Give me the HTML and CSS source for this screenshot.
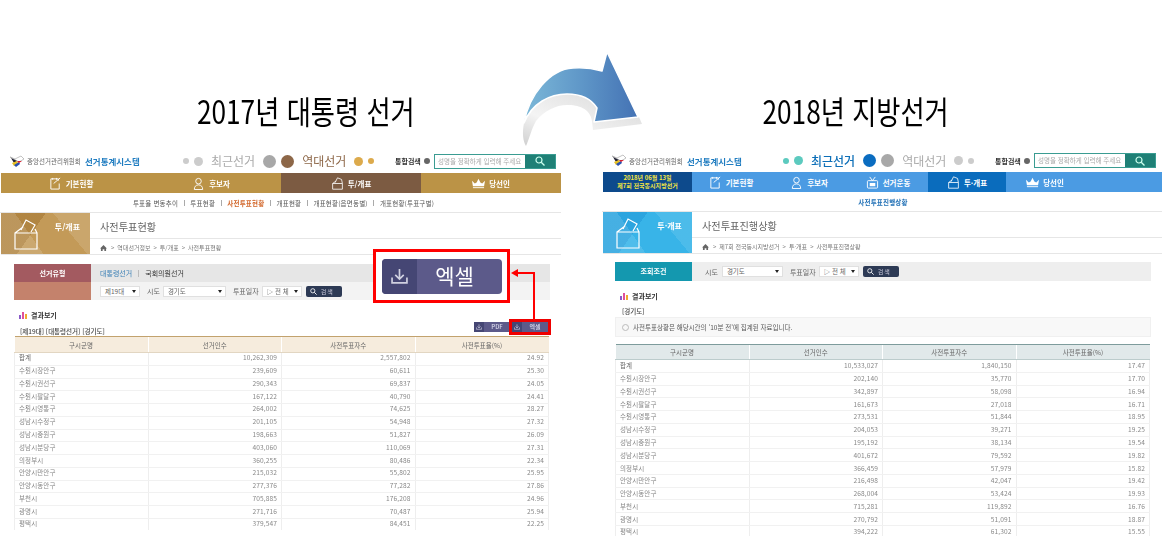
FILE: index.html
```html
<!DOCTYPE html>
<html lang="ko">
<head>
<meta charset="utf-8">
<title>2017 / 2018 선거통계시스템 비교</title>
<link rel="stylesheet" href="styles.css">
</head>
<body>
<svg class="sprite" width="0" height="0" aria-hidden="true">
  <symbol id="i-logo" viewBox="0 0 16 13"><path d="M1 2l5 2 6-3 3 3-5 3z" fill="#fff" stroke="#999" stroke-width=".6"/><path d="M2 3l6 3-3 2z" fill="#223"/><path d="M3 8l5-2 1 2-4 3z" fill="#e8c020"/><path d="M5 10l5-3 1 2-4 3z" fill="#2a50b0"/><path d="M8 6l5 0-3 2z" fill="#d82030"/></symbol>
  <symbol id="i-note" viewBox="0 0 14 14"><path d="M10 4V2H2v11h9V7M4 1v2M8 1v2M5 7l7-6" fill="none" stroke="currentColor" stroke-width="1"/></symbol>
  <symbol id="i-person" viewBox="0 0 14 14"><circle cx="7" cy="4.500" r="3" fill="none" stroke="currentColor"/><path d="M2.500 13.500c0-3 1.500-5 4.500-5s4.500 2 4.500 5z" fill="none" stroke="currentColor"/></symbol>
  <symbol id="i-tv" viewBox="0 0 14 14"><rect x="1.500" y="5" width="11" height="8" rx="1" fill="none" stroke="currentColor"/><rect x="4" y="7.500" width="6" height="3.500" fill="currentColor"/><path d="M4 1l3 4 3-4" fill="none" stroke="currentColor"/></symbol>
  <symbol id="i-box" viewBox="0 0 14 16"><path d="M1 8h12v7H1zM1 8l4-3M13 8l-1-5-5-2-3 6" fill="none" stroke="currentColor"/></symbol>
  <symbol id="i-crown" viewBox="0 0 14 10"><path d="M0 2l3 3 2-1 2-4 2 4 2 1 3-3-1 6H1z" fill="currentColor"/><path d="M1 9h12v1H1z" fill="currentColor"/></symbol>
  <symbol id="i-big" viewBox="0 0 24 32"><path d="M1 15h22v16H1zM1 15l8-6M23 15l-2-4M7 12l5-10 9 5-4 7" fill="none" stroke="currentColor" stroke-width="1.200"/></symbol>
  <symbol id="i-home" viewBox="0 0 8 7"><path d="M0 4l4-4 4 4H7v3H5V5H3v2H1V4z" fill="currentColor"/></symbol>
  <symbol id="i-bars" viewBox="0 0 8 7"><path d="M0 3h2v4H0z" fill="#8a5ac8"/><path d="M3 0h2v7H3z" fill="#e0509a"/><path d="M6 2h2v5H6z" fill="#f0a830"/></symbol>
  <symbol id="i-search" viewBox="0 0 10 10"><circle cx="4" cy="4" r="3" fill="none" stroke="currentColor" stroke-width="1.200"/><path d="M6.200 6.200L9.500 9.500" stroke="currentColor" stroke-width="1.300"/></symbol>
  <symbol id="i-dl" viewBox="0 0 16 14"><path d="M8 0v9M4 5.500l4 4 4-4M1 8v5h14V8" fill="none" stroke="currentColor" stroke-width="1.600"/></symbol>
</svg>

<main class="canvas">
  <section class="shot shot-a">
    <h2 class="caption"><span>2017년 대통령 선거</span></h2>
    <header class="top">
      <svg class="logo"><use href="#i-logo"/></svg>
      <span class="org">중앙선거관리위원회</span><strong class="sys">선거통계시스템</strong>
      <div class="switch">
        <i class="dot s6 off"></i><i class="dot s9 off"></i><b class="sw-txt off">최근선거</b><i class="dot s13 off2"></i>
        <i class="dot s13 on"></i><b class="sw-txt on-t">역대선거</b><i class="dot s9 on2"></i><i class="dot s6 on2"></i>
      </div>
      <div class="finder">
        <span class="finder-l">통합검색</span><i class="plus"></i>
        <div class="finder-box"><span class="finder-in">성명을 정확하게 입력해 주세요</span><span class="finder-b"><svg class="ic10"><use href="#i-search"/></svg></span></div>
      </div>
    </header>
    <nav class="nav">
      <a class="nav-i"><svg class="ic14"><use href="#i-note"/></svg>기본현황</a>
      <a class="nav-i"><svg class="ic14"><use href="#i-person"/></svg>후보자</a>
      <a class="nav-i active"><svg class="ic14"><use href="#i-box"/></svg>투/개표</a>
      <a class="nav-i"><svg class="ic14"><use href="#i-crown"/></svg>당선인</a>
    </nav>
    <div class="sub">
      <span>투표율 변동추이</span><u></u><span>투표현황</span><u></u><span class="cur">사전투표현황</span><u></u><span>개표현황</span><u></u><span>개표현황(읍면동별)</span><u></u><span>개표현황(투표구별)</span>
    </div>
    <div class="phead">
      <div class="badge"><svg class="ic-big"><use href="#i-big"/></svg><span>투/개표</span></div>
      <div class="ptext">
        <div class="ptitle">사전투표현황</div>
        <div class="crumb"><svg class="ic-home"><use href="#i-home"/></svg><span>&gt;</span><span>역대선거정보</span><span>&gt;</span><span>투/개표</span><span>&gt;</span><span>사전투표현황</span></div>
      </div>
    </div>
    <div class="content">
      <div class="filter">
        <div class="f-left"><div class="f-l1">선거유형</div><div class="f-l2"></div></div>
        <div class="f-right">
          <div class="f-tabs"><span class="tab-on">대통령선거</span><u></u><span class="tab">국회의원선거</span></div>
          <div class="f-row">
            <span class="sel w40">제19대</span><span class="lbl">시도</span><span class="sel w63">경기도</span><span class="lbl">투표일자</span><span class="sel w40">▷ 전 체</span>
            <span class="go"><svg class="ic8"><use href="#i-search"/></svg><em>검색</em></span>
          </div>
        </div>
      </div>
      <h3 class="rhead"><svg class="ic-bars"><use href="#i-bars"/></svg>결과보기</h3>
      <div class="rsub">
        <span>[제19대] [대통령선거] [경기도]</span>
        <div class="dls">
          <span class="dl"><i><svg class="ic7"><use href="#i-dl"/></svg></i><em>PDF</em></span>
          <span class="dl"><i><svg class="ic7"><use href="#i-dl"/></svg></i><em>엑셀</em></span>
        </div>
      </div>
      <table class="grid">
        <thead><tr><th>구시군명</th><th>선거인수</th><th>사전투표자수</th><th>사전투표율(%)</th></tr></thead>
        <tbody>
          <tr><td>합계</td><td>10,262,309</td><td>2,557,802</td><td>24.92</td></tr>
          <tr><td>수원시장안구</td><td>239,609</td><td>60,611</td><td>25.30</td></tr>
          <tr><td>수원시권선구</td><td>290,343</td><td>69,837</td><td>24.05</td></tr>
          <tr><td>수원시팔달구</td><td>167,122</td><td>40,790</td><td>24.41</td></tr>
          <tr><td>수원시영통구</td><td>264,002</td><td>74,625</td><td>28.27</td></tr>
          <tr><td>성남시수정구</td><td>201,105</td><td>54,948</td><td>27.32</td></tr>
          <tr><td>성남시중원구</td><td>198,663</td><td>51,827</td><td>26.09</td></tr>
          <tr><td>성남시분당구</td><td>403,060</td><td>110,069</td><td>27.31</td></tr>
          <tr><td>의정부시</td><td>360,255</td><td>80,486</td><td>22.34</td></tr>
          <tr><td>안양시만안구</td><td>215,032</td><td>55,802</td><td>25.95</td></tr>
          <tr><td>안양시동안구</td><td>277,376</td><td>77,282</td><td>27.86</td></tr>
          <tr><td>부천시</td><td>705,885</td><td>176,208</td><td>24.96</td></tr>
          <tr><td>광명시</td><td>271,716</td><td>70,487</td><td>25.94</td></tr>
          <tr><td>평택시</td><td>379,547</td><td>84,451</td><td>22.25</td></tr>
        </tbody>
      </table>
    </div>
  </section>

  <section class="shot shot-b">
    <h2 class="caption"><span>2018년 지방선거</span></h2>
    <header class="top">
      <svg class="logo"><use href="#i-logo"/></svg>
      <span class="org">중앙선거관리위원회</span><strong class="sys">선거통계시스템</strong>
      <div class="switch">
        <i class="dot s6 on2"></i><i class="dot s9 on2"></i><b class="sw-txt on-t">최근선거</b><i class="dot s13 on"></i>
        <i class="dot s13 off2"></i><b class="sw-txt off">역대선거</b><i class="dot s9 off"></i><i class="dot s6 off"></i>
      </div>
      <div class="finder">
        <span class="finder-l">통합검색</span><i class="plus"></i>
        <div class="finder-box"><span class="finder-in">성명을 정확하게 입력해 주세요</span><span class="finder-b"><svg class="ic10"><use href="#i-search"/></svg></span></div>
      </div>
    </header>
    <nav class="nav">
      <div class="banner"><span class="b1">2018년 06월 13일</span><span class="b2">제7회 전국동시지방선거</span></div>
      <a class="nav-i"><svg class="ic14"><use href="#i-note"/></svg>기본현황</a>
      <a class="nav-i"><svg class="ic14"><use href="#i-person"/></svg>후보자</a>
      <a class="nav-i wide"><svg class="ic14"><use href="#i-tv"/></svg>선거운동</a>
      <a class="nav-i active"><svg class="ic14"><use href="#i-box"/></svg>투·개표</a>
      <a class="nav-i"><svg class="ic14"><use href="#i-crown"/></svg>당선인</a>
    </nav>
    <div class="sub"><span class="cur">사전투표진행상황</span></div>
    <div class="phead">
      <div class="badge"><svg class="ic-big"><use href="#i-big"/></svg><span>투·개표</span></div>
      <div class="ptext">
        <div class="ptitle">사전투표진행상황</div>
        <div class="crumb"><svg class="ic-home"><use href="#i-home"/></svg><span>&gt;</span><span>제7회 전국동시지방선거</span><span>&gt;</span><span>투·개표</span><span>&gt;</span><span>사전투표진행상황</span></div>
      </div>
    </div>
    <div class="content">
      <div class="filter">
        <div class="f-left"><div class="f-l1">조회조건</div></div>
        <div class="f-right">
          <div class="f-row">
            <span class="lbl">시도</span><span class="sel w61">경기도</span><span class="lbl">투표일자</span><span class="sel w40">▷ 전 체</span>
            <span class="go"><svg class="ic8"><use href="#i-search"/></svg><em>검색</em></span>
          </div>
        </div>
      </div>
      <h3 class="rhead"><svg class="ic-bars"><use href="#i-bars"/></svg>결과보기</h3>
      <div class="rsub"><span>[경기도]</span></div>
      <p class="notice"><i></i>사전투표상황은 해당시간의 '10분 전'에 집계된 자료입니다.</p>
      <table class="grid">
        <thead><tr><th>구시군명</th><th>선거인수</th><th>사전투표자수</th><th>사전투표율(%)</th></tr></thead>
        <tbody>
          <tr><td>합계</td><td>10,533,027</td><td>1,840,150</td><td>17.47</td></tr>
          <tr><td>수원시장안구</td><td>202,140</td><td>35,770</td><td>17.70</td></tr>
          <tr><td>수원시권선구</td><td>342,897</td><td>58,098</td><td>16.94</td></tr>
          <tr><td>수원시팔달구</td><td>161,673</td><td>27,018</td><td>16.71</td></tr>
          <tr><td>수원시영통구</td><td>273,531</td><td>51,844</td><td>18.95</td></tr>
          <tr><td>성남시수정구</td><td>204,053</td><td>39,271</td><td>19.25</td></tr>
          <tr><td>성남시중원구</td><td>195,192</td><td>38,134</td><td>19.54</td></tr>
          <tr><td>성남시분당구</td><td>401,672</td><td>79,592</td><td>19.82</td></tr>
          <tr><td>의정부시</td><td>366,459</td><td>57,979</td><td>15.82</td></tr>
          <tr><td>안양시만안구</td><td>216,498</td><td>42,047</td><td>19.42</td></tr>
          <tr><td>안양시동안구</td><td>268,004</td><td>53,424</td><td>19.93</td></tr>
          <tr><td>부천시</td><td>715,281</td><td>119,892</td><td>16.76</td></tr>
          <tr><td>광명시</td><td>270,792</td><td>51,091</td><td>18.87</td></tr>
          <tr><td>평택시</td><td>394,222</td><td>61,302</td><td>15.55</td></tr>
        </tbody>
      </table>
    </div>
  </section>

  <svg class="swoosh" viewBox="0 0 130 110" aria-hidden="true">
    <defs>
      <linearGradient id="sw" x1="0" y1="0" x2="1" y2="0"><stop offset="0" stop-color="#7cb8d8"/><stop offset=".5" stop-color="#5f97c8"/><stop offset="1" stop-color="#4472b4"/></linearGradient>
      <linearGradient id="sw2" x1="0" y1="1" x2="1" y2="0"><stop offset="0" stop-color="#cfcfcf"/><stop offset=".35" stop-color="#f4f4f4"/><stop offset="1" stop-color="#d8d8d8"/></linearGradient>
    </defs>
    <path d="M4 78C2 88 3 96 6 101C9 95 11 85 16 76C24 66 36 60 47 60C58 60 70 63 72 76L73 85L122 79L119 72L74 77L77 63C70 52 58 49 47 49C30 49 12 58 4 78Z" fill="url(#sw2)"/>
    <path d="M4 78C9 50 30 24 53 23C65 22 75 24 82 26L87 7L118 72L74 77L77 63C70 52 58 49 47 49C30 49 12 58 4 78Z" fill="url(#sw)" stroke="#fff" stroke-width="1.500" stroke-linejoin="round"/>
  </svg>

  <div class="callout">
    <div class="big-dl"><i><svg class="ic-dl"><use href="#i-dl"/></svg></i><em>엑셀</em></div>
  </div>
  <div class="mark"></div>
  <svg class="link" viewBox="0 0 32 56" aria-hidden="true"><path d="M23 52V5H6" fill="none" stroke="#f00" stroke-width="2"/><path d="M0 5l7-4v8z" fill="#f00"/></svg>
</main>
</body>
</html>
```
FILE: styles.css
```css
* { box-sizing: border-box; }
html, body { margin: 0; height: 100%; background: #fff; overflow: hidden; }
body { font-family: "Noto Sans CJK KR", "Noto Sans", sans-serif; color: #555; }
.sprite { position: absolute; }
h2, h3, p { margin: 0; }
em { font-style: normal; }
i { font-style: normal; display: block; }
u { text-decoration: none; }

.canvas {
  position: relative;
  width: 1162px;
  height: 536px;
  display: grid;
  grid-template-columns: 561px 560px;
  column-gap: 41px;
  overflow: hidden;
  filter: blur(.4px);
}

.shot { display: flex; flex-direction: column; overflow: hidden; }
.shot-a {
  height: 530px;
  --nav: #bb9346; --nav-on: #7c5b42; --on: #8d6748; --on2: #dcaa4c; --sub-cur: #d2662a;
  --pad: 14px; --top: 23px; --fgap: 9px;
  --th: #f6ecdd; --th-top: #c2a26e; --th-bot: #e2d6c2;
}
.shot-b {
  height: 536px;
  --nav: #4b9be3; --nav-on: #0a6cbd; --on: #0a6cc0; --on2: #5ccabf; --sub-cur: #1f6fb5;
  --pad: 13px; --top: 22px; --fgap: 8px;
  --th: #e1e9ea; --th-top: #7e9c9c; --th-bot: #bccccc;
}

.caption { height: 150px; flex: none; padding-top: 87px; font-size: 32px; line-height: 46px; font-weight: 400; color: #000; text-align: center; white-space: nowrap; }
.caption span { display: inline-block; transform: scaleX(.82); }
.shot-a .caption { margin-left: 50px; }
.shot-b .caption { margin-right: 52px; }

/* top bar */
.top { height: var(--top); flex: none; display: flex; align-items: center; padding-left: 9px; padding-bottom: 1px; }
.logo { width: 16px; height: 13px; flex: none; }
.org { font-size: 6.500px; margin-left: 2px; color: #666; white-space: nowrap; width: 58px; }
.sys { font-size: 8.500px; color: #1f7cc0; font-weight: 700; white-space: nowrap; width: 56px; }
.switch { display: flex; align-items: center; margin-left: 42px; gap: 5px; width: 189px; }
.shot-b .switch { margin-left: 40px; }
.dot { border-radius: 50%; flex: none; }
.s6 { width: 6px; height: 6px; }
.s9 { width: 9px; height: 9px; }
.s13 { width: 13px; height: 13px; }
.off { background: #ccc; }
.off2 { background: #a8a8a8; }
.on { background: var(--on); }
.on2 { background: var(--on2); }
.sw-txt { font-size: 12px; line-height: 16px; font-weight: 400; margin: 0 3px; white-space: nowrap; }
.sw-txt.off { background: none; color: #aaa; }
.on-t { color: var(--on); }
.shot-b .on-t { color: #0d6fb8; font-weight: 500; }
.finder { display: flex; align-items: center; margin-left: 23px; }
.finder-l { font-size: 7px; font-weight: 700; color: #333; white-space: nowrap; width: 28px; }
.plus { width: 6px; height: 6px; border-radius: 50%; background: #666; margin: 0 4px 0 1px; }
.finder-box { width: 122px; height: 15px; border: 1px solid #3a9c92; display: flex; background: #fff; }
.finder-in { flex: 1; font-size: 6.500px; line-height: 13px; color: #aaa; padding-left: 3px; white-space: nowrap; overflow: hidden; }
.finder-b { width: 30px; background: #1f8076; color: #cfe; display: flex; align-items: center; justify-content: center; }
.ic10 { width: 10px; height: 10px; }

/* nav */
.nav { height: 20px; flex: none; margin-left: 1px; display: flex; background: var(--nav); color: #fff; font-size: 7.500px; font-weight: 700; }
.nav-i { flex: 1; display: flex; align-items: center; justify-content: center; gap: 4px; white-space: nowrap; }
.nav-i.active { background: var(--nav-on); }
.shot-b .nav-i { flex: 0 0 78px; }
.shot-b .nav-i.wide { flex-basis: 80px; }
.ic14 { width: 13px; height: 13px; flex: none; }
.banner { width: 89px; flex: none; background: #0d4a8c; display: flex; flex-direction: column; align-items: center; justify-content: center; color: #f5e642; font-size: 6px; line-height: 8px; white-space: nowrap; }

/* sub nav */
.sub { height: 20px; flex: none; display: flex; align-items: center; justify-content: center; gap: 5.600px; font-size: 6.500px; letter-spacing: .2px; color: #555; border-bottom: 1px solid #e6e6e6; white-space: nowrap; padding-left: 6px; }
.sub u { width: 1px; height: 6px; background: #aaa; }
.sub .cur { color: var(--sub-cur); font-weight: 700; }
.shot-b .sub { padding: 0 0 0 2px; }

/* page head */
.phead { height: 42px; flex: none; display: flex; margin-left: 1px; border-bottom: 1px solid #e6e6e6; }
.badge { width: 89px; flex: none; display: flex; justify-content: space-between; padding: 5px 10px 0 13px; color: #fff; font-size: 8px; font-weight: 700; }
.badge span { line-height: 16px; padding-top: 1px; }
.shot-a .badge { background: linear-gradient(55deg, rgba(255,255,255,.14) 0 36%, transparent 36%), linear-gradient(125deg, rgba(130,80,10,.28) 0 38%, transparent 38%), linear-gradient(230deg, rgba(255,255,255,.12) 0 30%, transparent 30%), #c39a58; }
.shot-b .badge { background: linear-gradient(55deg, rgba(255,255,255,.12) 0 36%, transparent 36%), linear-gradient(125deg, rgba(0,110,190,.22) 0 38%, transparent 38%), linear-gradient(230deg, rgba(255,255,255,.1) 0 30%, transparent 30%), #38b4e8; }
.ic-big { width: 24px; height: 32px; flex: none; }
.ptext { flex: 1; }
.ptitle { height: 26px; border-bottom: 1px solid #e6e6e6; padding: 2px 0 0 10px; font-size: 10.200px; line-height: 23px; color: #666; white-space: nowrap; }
.crumb { height: 15px; display: flex; align-items: center; gap: 3px; padding: 2px 0 0 10px; font-size: 6px; color: #777; white-space: nowrap; }
.ic-home { width: 7px; height: 6px; margin-right: 1px; color: #666; }

/* content */
.content { flex: none; padding-left: var(--pad); width: calc(536px + var(--pad)); margin-top: var(--fgap); }
.filter { display: flex; }
.f-left { width: 77px; flex: none; display: flex; flex-direction: column; }
.f-l1 { height: 18px; background: #a35a60; color: #fff; font-size: 7px; font-weight: 700; line-height: 18px; text-align: center; white-space: nowrap; }
.f-l2 { height: 18px; background: #c4826c; }
.shot-b .f-l1 { height: 19px; line-height: 19px; background: #1498af; }
.f-right { flex: 1; background: #f3f3f3; }
.f-tabs { height: 18px; background: #e6e6e6; display: flex; align-items: center; gap: 6px; padding-left: 9px; font-size: 7px; white-space: nowrap; }
.f-tabs u { width: 1px; height: 7px; background: #bbb; }
.tab-on { color: #3a7fb5; }
.tab { color: #333; }
.f-row { height: 18px; display: flex; align-items: center; padding-left: 9px; font-size: 7px; color: #666; white-space: nowrap; }
.shot-b .f-right { background: #eee; }
.shot-b .f-row { height: 19px; padding-left: 13px; }
.lbl { margin: 0 3px 0 7px; }
.shot-b .lbl:first-child { margin-left: 0; margin-right: 4px; }
.sel { height: 11px; background: #fff; border: 1px solid #e0e0e0; line-height: 9px; padding-left: 4px; font-size: 6.500px; position: relative; }
.sel::after { content: ""; position: absolute; right: 3px; top: 3px; border: 2px solid transparent; border-top: 3px solid #222; }
.w40 { width: 40px; }
.w61 { width: 61px; }
.w63 { width: 63px; }
.go { margin-left: 4px; width: 36px; height: 11px; border-radius: 2px; background: #2d3a55; color: #fff; display: flex; align-items: center; gap: 4px; padding-left: 4px; font-size: 6px; }
.go em { color: #ccd; letter-spacing: 1px; }
.ic8 { width: 7px; height: 7px; }

.rhead { display: flex; align-items: center; gap: 4px; height: 12px; padding-left: 5px; font-size: 7px; font-weight: 700; color: #333; white-space: nowrap; }
.ic-bars { width: 8px; height: 7px; }
.rsub { display: flex; align-items: flex-end; justify-content: space-between; padding-left: 6px; padding-right: 2px; font-size: 6.500px; font-weight: 500; color: #444; white-space: nowrap; }
.rsub > span { line-height: 8px; }
.dls { display: flex; gap: 2px; margin-top: -1px; align-self: flex-start; }
.dl { display: flex; width: 36px; height: 10px; background: #5c5a8a; color: #dde; font-size: 6px; line-height: 10px; }
.dl i { width: 10px; background: #454674; display: flex; align-items: center; justify-content: center; }
.dl em { flex: 1; text-align: center; }
.ic7 { width: 6px; height: 6px; }
.shot-a .rhead { margin-top: 9px; }
.shot-a .rsub { margin-top: 2px; height: 12px; }
.shot-a .grid { margin-top: 1px; }
.shot-a .grid th { height: 16px; }
.shot-a .grid td { padding-bottom: 2px; line-height: 9px; }
.shot-b .rhead { margin-top: 9px; }
.shot-b .rsub { margin-top: 3px; height: 10px; padding-left: 7px; }

.notice { display: flex; align-items: center; gap: 4px; height: 20px; margin-top: 2px; padding-left: 6px; background: #f8f8f8; border: 1px solid #f0f0f0; font-size: 6.500px; color: #555; white-space: nowrap; }
.notice i { width: 7px; height: 7px; border-radius: 50%; border: 1px solid #bbb; }
.shot-b .grid { margin-top: 7px; }

.grid { width: 535px; table-layout: fixed; border-collapse: collapse; font-size: 6.600px; color: #888; }
.grid th { height: 15px; padding: 0; background: var(--th); border-top: 1px solid var(--th-top); border-bottom: 1px solid var(--th-bot); border-left: 1px solid #fff; font-size: 6.500px; font-weight: 400; color: #666; text-align: center; }
.grid th:first-child { border-left: 0; }
.grid tbody tr { height: 12.770px; }
.grid td { padding: 0 4px 0 0; line-height: 11px; border-bottom: 1.500px solid #f1f1f1; border-right: 1px solid #eee; text-align: right; white-space: nowrap; letter-spacing: .1px; }
.grid td:first-child { padding-left: 4px; text-align: left; font-size: 6.500px; border-left: 1px solid #eee; }
.grid tbody tr:first-child td:first-child { color: #666; }

/* overlays above the screenshots */
.swoosh { position: absolute; left: 520px; top: 45px; width: 130px; height: 110px; }
.callout { position: absolute; left: 373px; top: 249px; width: 137px; height: 54px; border: 3px solid #f00; background: #fff; padding: 7px 5px 6px 6px; }
.big-dl { height: 35px; width: 120px; display: flex; border-radius: 4px; overflow: hidden; background: #5c5a8a; color: #fff; }
.big-dl i { width: 35px; background: #454674; display: flex; align-items: center; justify-content: center; color: #cfd0e0; }
.big-dl em { flex: 1; text-align: center; font-size: 21px; line-height: 33px; padding-right: 10px; }
.ic-dl { width: 17px; height: 15px; }
.mark { position: absolute; left: 509px; top: 319px; width: 42px; height: 16px; border: 3px solid #e00; }
.link { position: absolute; left: 511px; top: 268px; width: 32px; height: 56px; }
```
